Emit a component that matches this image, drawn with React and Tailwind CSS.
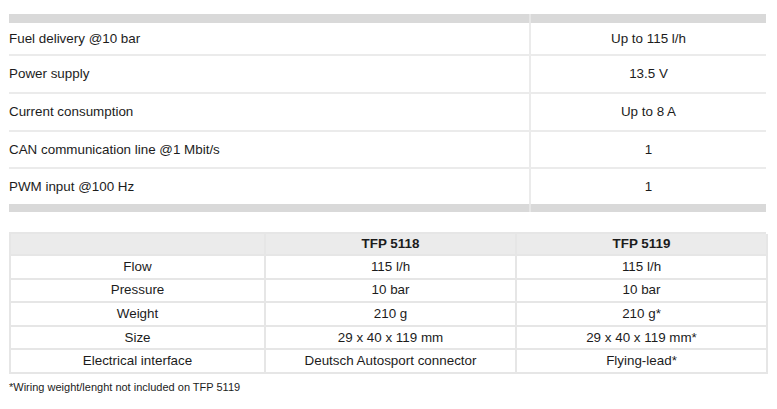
const specs = [
  { label: 'Fuel delivery @10 bar', value: 'Up to 115 l/h', h: 'h-[33px]' },
  { label: 'Power supply', value: '13.5 V', h: 'h-[38px]' },
  { label: 'Current consumption', value: 'Up to 8 A', h: 'h-[38px]' },
  { label: 'CAN communication line @1 Mbit/s', value: '1', h: 'h-[37px]' },
  { label: 'PWM input @100 Hz', value: '1', h: 'h-[35px]', last: true },
];

const models = [
  ['Flow', '115 l/h', '115 l/h'],
  ['Pressure', '10 bar', '10 bar'],
  ['Weight', '210 g', '210 g*'],
  ['Size', '29 x 40 x 119 mm', '29 x 40 x 119 mm*'],
  ['Electrical interface', 'Deutsch Autosport connector', 'Flying-lead*'],
];

function SpecTable() {
  return (
    <div className="grid grid-cols-[520px_237px]">
      <div className="h-[9px] bg-[#d9d9d9]" />
      <div className="h-[9px] bg-[#d9d9d9] border-l-2 border-[#e6e6e6]" />
      {specs.map((row) => (
        <div key={row.label} className="contents">
          <div
            className={`${row.h} flex items-center pt-[1px] ${row.last ? '' : 'border-b-2 border-[#ebebeb]'}`}
          >
            {row.label}
          </div>
          <div
            className={`${row.h} flex items-center justify-center pt-[1px] border-l-2 border-[#ebebeb] ${row.last ? '' : 'border-b-2'}`}
          >
            {row.value}
          </div>
        </div>
      ))}
      <div className="h-[8px] bg-[#d9d9d9]" />
      <div className="h-[8px] bg-[#d9d9d9] border-l-2 border-[#e6e6e6]" />
    </div>
  );
}

function ModelTable() {
  return (
    <div className="grid grid-cols-[255px_251px_251px] border-t-2 border-l-2 border-[#e6e6e6]">
      <div className="h-[22px] bg-[#ebebeb] border-r-2 border-b-2 border-[#e6e6e6]" />
      <div className="h-[22px] bg-[#ebebeb] border-r-2 border-b-2 border-[#e6e6e6] flex items-center justify-center font-bold">
        TFP 5118
      </div>
      <div className="h-[22px] bg-[#ebebeb] border-r-2 border-b-2 border-[#e6e6e6] flex items-center justify-center font-bold">
        TFP 5119
      </div>
      {models.map((row) =>
        row.map((cell, i) => (
          <div
            key={row[0] + i}
            className="h-[23.6px] border-r-2 border-b-2 border-[#e6e6e6] flex items-center justify-center"
          >
            {cell}
          </div>
        ))
      )}
    </div>
  );
}

export default function App() {
  return (
    <div
      className="w-[777px] h-[409px] bg-white overflow-hidden pt-[14px] pl-[9px] text-[13.4px] text-[#1c1c1c]"
      style={{ fontFamily: '"Liberation Sans", Arial, sans-serif' }}
    >
      <div className="w-[757px]">
        <SpecTable />
        <div className="mt-[20px]">
          <ModelTable />
        </div>
        <p className="mt-[6px] text-[11px] leading-[14px]">
          *Wiring weight/lenght not included on TFP 5119
        </p>
      </div>
    </div>
  );
}
